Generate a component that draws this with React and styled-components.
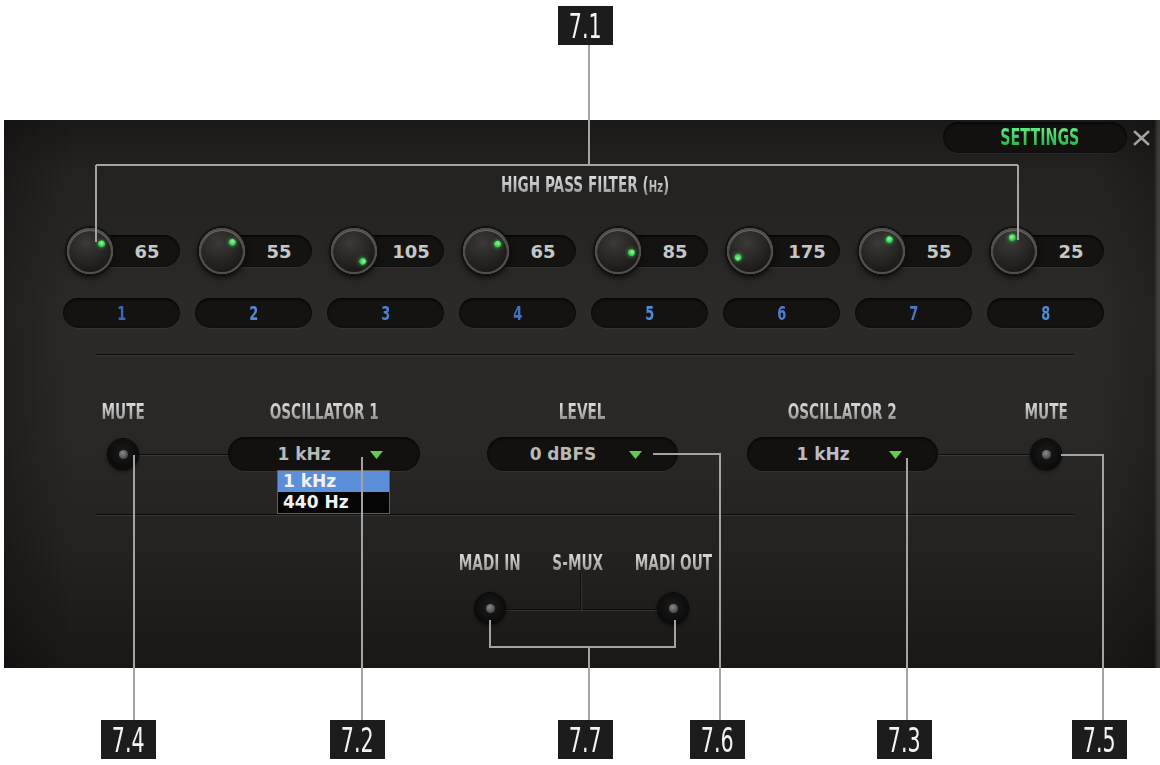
import React from "react";
import styled, { createGlobalStyle } from "styled-components";

const GlobalStyle = createGlobalStyle`
  html, body { margin: 0; padding: 0; background: #ffffff; }
  body { font-family: "DejaVu Sans", sans-serif; }
`;

const condensed = `
  font-family: "DejaVu Sans Condensed", "DejaVu Sans", sans-serif;
  font-stretch: condensed;
  font-weight: 700;
`;

const Stage = styled.div`
  position: relative;
  width: 1160px;
  height: 765px;
  overflow: hidden;
  background: #ffffff;
  display: flex;
  flex-direction: column;
`;

const Panel = styled.section`
  margin-top: 120px;
  margin-left: 4px;
  width: 1156px;
  height: 548px;
  box-sizing: border-box;
  display: flex;
  flex-direction: column;
  background:
    linear-gradient(90deg, rgba(0,0,0,0.25) 0px, rgba(0,0,0,0) 70px, rgba(0,0,0,0) 1090px, rgba(0,0,0,0.2) 1150px, rgba(90,88,84,0.5) 1154px),
    linear-gradient(180deg, #1b1918 0px, #242221 50px, #2c2a28 190px, #2a2826 320px, #242220 430px, #1a1715 548px);
`;

const Header = styled.header`
  height: 36px;
  display: flex;
  justify-content: flex-end;
  align-items: flex-start;
`;

const Tab = styled.div`
  margin-top: 2px;
  width: 184px;
  height: 31px;
  border-radius: 16px;
  background: #121110;
  box-shadow: inset 0 1px 3px rgba(0,0,0,0.9), 0 1px 0 rgba(255,255,255,0.04);
  display: flex;
  align-items: center;
  justify-content: center;
  padding-left: 10px;
  box-sizing: border-box;
`;

const TabTitle = styled.span`
  ${condensed}
  display: inline-block;
  font-size: 22px;
  line-height: 24px;
  transform: scale(0.72, 1.05);
  background: linear-gradient(180deg, #6cf08a 0%, #3cc85c 55%, #25a043 100%);
  -webkit-background-clip: text;
  background-clip: text;
  color: transparent;
`;

const Close = styled.button`
  margin: 10px 10px 0 6px;
  width: 17px;
  height: 16px;
  padding: 0;
  border: 0;
  background: none;
  display: flex;
`;

const Content = styled.div`
  width: 1041px;
  margin-left: 59px;
  display: flex;
  flex-direction: column;
`;

const Label = styled.span`
  ${condensed}
  display: inline-block;
  font-size: 19px;
  line-height: 22px;
  white-space: nowrap;
  transform: scale(0.8, 1.08);
  background: linear-gradient(180deg, #e6e6e6 0%, #bdbdbd 50%, #7c7c7c 100%);
  -webkit-background-clip: text;
  background-clip: text;
  color: transparent;
`;

const Small = styled.span`
  font-size: 14px;
`;

const Title = styled.div`
  margin-top: 18px;
  text-align: center;
  height: 22px;
  padding-left: 3px;
`;

const KnobRow = styled.div`
  margin-top: 31px;
  display: flex;
  gap: 15px;
  height: 48px;
`;

const KnobGroup = styled.div`
  width: 117px;
  display: flex;
  align-items: center;
`;

const Knob = styled.div`
  position: relative;
  z-index: 1;
  flex: 0 0 46px;
  height: 46px;
  margin-left: 4px;
  border-radius: 50%;
  background: radial-gradient(circle at 42% 32%, #3a3937 0%, #272624 45%, #161514 80%);
  box-shadow:
    inset 0 0 0 2px #4f4e4b,
    inset 0 1px 0 2px #6a6965,
    0 0 0 2px #121110,
    0 3px 6px rgba(0,0,0,0.85);
`;

const Pointer = styled.div`
  position: absolute;
  inset: 0;
  transform: rotate(${(p) => p.$angle}deg);
`;

const Dot = styled.span`
  position: absolute;
  top: 6px;
  left: 50%;
  width: 7px;
  height: 7px;
  margin-left: -3.5px;
  border-radius: 50%;
  background: radial-gradient(circle at 40% 40%, #8cff98, #39c44e 60%, #1f8a33);
  box-shadow: 0 0 4px rgba(70, 220, 90, 0.8);
`;

const ValuePill = styled.div`
  margin-left: -30px;
  width: 97px;
  height: 32px;
  padding-left: 31px;
  box-sizing: border-box;
  border-radius: 16px;
  background: #141312;
  box-shadow: inset 0 1px 3px rgba(0,0,0,0.9), 0 1px 0 rgba(255,255,255,0.05);
  display: flex;
  align-items: center;
  justify-content: center;
  font-family: "DejaVu Sans", sans-serif;
  font-weight: 700;
  font-size: 18px;
  color: #c6c6c4;
`;

const ChannelRow = styled.div`
  margin-top: 23px;
  display: flex;
  gap: 15px;
`;

const ChannelPill = styled.div`
  width: 117px;
  height: 30px;
  border-radius: 15px;
  background: #141312;
  box-shadow: inset 0 1px 3px rgba(0,0,0,0.9), 0 1px 0 rgba(255,255,255,0.05);
  display: flex;
  align-items: center;
  justify-content: center;
`;

const ChannelNum = styled.span`
  ${condensed}
  display: inline-block;
  font-size: 18px;
  transform: scale(0.8, 1.05);
  color: ${(p) => p.$tone};
`;

const Divider = styled.hr`
  margin: ${(p) => p.$top}px 0 0 33px;
  width: 978px;
  height: 1px;
  border: 0;
  background: #0c0b0b;
  box-shadow: 0 1px 0 #383634;
`;

const OscGrid = styled.div`
  margin-top: 45px;
  margin-left: 38px;
  display: grid;
  grid-template-columns: 44px 83px 192px 67px 191px 69px 191px 86px 44px;
  grid-template-rows: 22px 34px;
  row-gap: 15px;
`;

const Cell = styled.div`
  grid-column: ${(p) => p.$col};
  grid-row: ${(p) => p.$row};
  display: flex;
  align-items: center;
  justify-content: center;
  position: relative;
`;

const Connector = styled.div`
  grid-column: ${(p) => p.$col};
  grid-row: 2;
  align-self: center;
  height: 1px;
  margin: 0 ${(p) => p.$mr || 0}px 0 ${(p) => p.$ml || 0}px;
  background: #0e0d0c;
  box-shadow: 0 1px 0 #3b3936;
`;

const RoundButton = styled.div`
  width: 30px;
  height: 30px;
  border-radius: 50%;
  background: radial-gradient(circle at 50% 45%, #1d1c1b 0%, #0c0b0b 70%);
  box-shadow: 0 0 0 1px #0a0909, 0 2px 4px rgba(0,0,0,0.8), 0 -1px 0 rgba(255,255,255,0.06);
  display: flex;
  align-items: center;
  justify-content: center;
`;

const ButtonLamp = styled.span`
  width: 9px;
  height: 9px;
  border-radius: 50%;
  background: radial-gradient(circle at 40% 35%, #8a8a88, #4c4b49 70%);
`;

const Select = styled.div`
  width: 100%;
  height: 34px;
  border-radius: 17px;
  background: #121110;
  box-shadow: inset 0 1px 3px rgba(0,0,0,0.9), 0 1px 0 rgba(255,255,255,0.05);
  display: flex;
  align-items: center;
`;

const SelectValue = styled.span`
  flex: 0 0 120px;
  margin-left: 16px;
  text-align: center;
  font-family: "DejaVu Sans", sans-serif;
  font-weight: 700;
  font-size: 17px;
  color: ${(p) => p.$tone || "#b9b9b7"};
`;

const Caret = styled.svg`
  margin-left: 6px;
  margin-top: 2px;
`;

const Menu = styled.ul`
  position: absolute;
  top: 33px;
  left: 49px;
  width: 111px;
  margin: 0;
  padding: 0;
  list-style: none;
  background: #050505;
  border: 1px solid #5f5f5f;
  z-index: 2;
`;

const MenuItem = styled.li`
  height: 21px;
  line-height: 21px;
  padding-left: 5px;
  font-family: "DejaVu Sans", sans-serif;
  font-weight: 700;
  font-size: 17px;
  color: #f2f2f2;
  background: ${(p) => (p.$active ? "#5c8fd9" : "transparent")};
`;

const MadiGrid = styled.div`
  margin-top: 36px;
  margin-left: 394px;
  display: grid;
  grid-template-columns: 66px 110px 80px;
  grid-template-rows: 22px 30px;
  row-gap: 20px;
`;

const MadiLink = styled.div`
  grid-column: 1 / 4;
  grid-row: 2;
  align-self: center;
  margin: 2px 40px 0 33px;
  height: 1px;
  background: #0e0d0c;
  box-shadow: 0 1px 0 #34322f;
`;

const MadiStem = styled.div`
  grid-column: 2;
  grid-row: 2;
  justify-self: center;
  align-self: start;
  margin-top: -20px;
  margin-left: 4px;
  width: 1px;
  height: 37px;
  background: #0e0d0c;
  box-shadow: 1px 0 0 #34322f;
`;

/* annotation layer: leader lines and numbered tags drawn over the panel */
const Annotations = styled.div`
  position: absolute;
  inset: 0;
  pointer-events: none;
  z-index: 5;
`;

const Tag = styled.div`
  position: absolute;
  left: ${(p) => p.$x}px;
  top: ${(p) => p.$y}px;
  width: 55px;
  height: 39px;
  background: #1c1c1c;
  display: flex;
  align-items: center;
  justify-content: center;
`;

const TagText = styled.span`
  font-family: "DejaVu Sans Condensed", "DejaVu Sans", sans-serif;
  font-stretch: condensed;
  font-size: 31px;
  line-height: 30px;
  color: #f4f4f4;
  display: inline-block;
  transform: scale(0.74, 1.1);
`;

const knobs = [
  { value: 65, angle: 56, tone: "#3b66c2" },
  { value: 55, angle: 48, tone: "#4f8ad6" },
  { value: 105, angle: 138, tone: "#4a80d0" },
  { value: 65, angle: 57, tone: "#3f73c8" },
  { value: 85, angle: 95, tone: "#4f8ad6" },
  { value: 175, angle: 240, tone: "#4a7fd0" },
  { value: 55, angle: 31, tone: "#4a78c8" },
  { value: 25, angle: -9, tone: "#4f8ad6" },
];

const tags = [
  { id: "7.1", x: 558, y: 6 },
  { id: "7.4", x: 101, y: 720 },
  { id: "7.2", x: 330, y: 720 },
  { id: "7.7", x: 558, y: 720 },
  { id: "7.6", x: 690, y: 720 },
  { id: "7.3", x: 877, y: 720 },
  { id: "7.5", x: 1072, y: 720 },
];

const leaders = [
  "M589 44 V165 M96 165 H1018 M96 165 V242 M1018 165 V240",
  "M134 455 V720",
  "M362 457 V720",
  "M490 620 V647 H675 V620 M589 647 V720",
  "M653 454 H720 V720",
  "M907 458 V720",
  "M1061 455 H1103 V720",
];

function CaretIcon() {
  return (
    <Caret width="13" height="8" viewBox="0 0 13 8">
      <path d="M0 0 H13 L6.5 8 Z" fill="#62cf4c" />
    </Caret>
  );
}

function MuteButton() {
  return (
    <RoundButton>
      <ButtonLamp />
    </RoundButton>
  );
}

export default function App() {
  return (
    <Stage>
      <GlobalStyle />
      <Panel>
        <Header>
          <Tab>
            <TabTitle>SETTINGS</TabTitle>
          </Tab>
          <Close aria-label="close">
            <svg width="17" height="16" viewBox="0 0 17 16">
              <path d="M2 2 L15 14 M15 2 L2 14" stroke="#a3a3a1" strokeWidth="2.6" strokeLinecap="square" />
            </svg>
          </Close>
        </Header>

        <Content>
          <Title>
            <Label>
              HIGH PASS FILTER (<Small>Hz</Small>)
            </Label>
          </Title>

          <KnobRow>
            {knobs.map((k, i) => (
              <KnobGroup key={i}>
                <Knob>
                  <Pointer $angle={k.angle}>
                    <Dot />
                  </Pointer>
                </Knob>
                <ValuePill>{k.value}</ValuePill>
              </KnobGroup>
            ))}
          </KnobRow>

          <ChannelRow>
            {knobs.map((k, i) => (
              <ChannelPill key={i}>
                <ChannelNum $tone={k.tone}>{i + 1}</ChannelNum>
              </ChannelPill>
            ))}
          </ChannelRow>

          <Divider $top={26} />

          <OscGrid>
            <Cell $col={1} $row={1}><Label>MUTE</Label></Cell>
            <Cell $col={3} $row={1}><Label>OSCILLATOR 1</Label></Cell>
            <Cell $col={5} $row={1}><Label>LEVEL</Label></Cell>
            <Cell $col={7} $row={1}><Label>OSCILLATOR 2</Label></Cell>
            <Cell $col={9} $row={1}><Label>MUTE</Label></Cell>

            <Connector $col={2} $ml={-6} />
            <Connector $col={8} $mr={-6} />

            <Cell $col={1} $row={2}><MuteButton /></Cell>
            <Cell $col={3} $row={2}>
              <Select>
                <SelectValue>1 kHz</SelectValue>
                <CaretIcon />
              </Select>
              <Menu>
                <MenuItem $active>1 kHz</MenuItem>
                <MenuItem>440 Hz</MenuItem>
              </Menu>
            </Cell>
            <Cell $col={5} $row={2}>
              <Select>
                <SelectValue>0 dBFS</SelectValue>
                <CaretIcon />
              </Select>
            </Cell>
            <Cell $col={7} $row={2}>
              <Select>
                <SelectValue $tone="#b8bccc">1 kHz</SelectValue>
                <CaretIcon />
              </Select>
            </Cell>
            <Cell $col={9} $row={2}><MuteButton /></Cell>
          </OscGrid>

          <Divider $top={43} />

          <MadiGrid>
            <Cell $col={1} $row={1}><Label>MADI IN</Label></Cell>
            <Cell $col={2} $row={1}><Label>S-MUX</Label></Cell>
            <Cell $col={3} $row={1}><Label>MADI OUT</Label></Cell>
            <MadiLink />
            <MadiStem />
            <Cell $col={1} $row={2}><MuteButton /></Cell>
            <Cell $col={3} $row={2}><MuteButton /></Cell>
          </MadiGrid>
        </Content>
      </Panel>

      <Annotations>
        <svg width="1160" height="765" viewBox="0 0 1160 765">
          {leaders.map((d, i) => (
            <path key={i} d={d} fill="none" stroke="#a3a3a3" strokeWidth="2" />
          ))}
        </svg>
        {tags.map((t) => (
          <Tag key={t.id} $x={t.x} $y={t.y}>
            <TagText>{t.id}</TagText>
          </Tag>
        ))}
      </Annotations>
    </Stage>
  );
}
